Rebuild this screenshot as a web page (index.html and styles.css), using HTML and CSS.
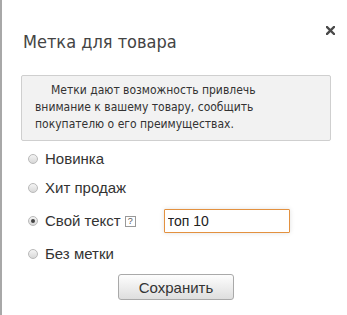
FILE: index.html
```html
<!DOCTYPE html>
<html lang="ru">
<head>
  <meta charset="UTF-8" />
  <title>Метка для товара</title>
  <link rel="stylesheet" href="styles.css">
</head>
<body>
  <div class="dialog">
    <div class="header">
      <h1 class="title">Метка для товара</h1>
      <span class="close">
        <svg width="9" height="9" viewBox="0 0 9 9"><path d="M1 1 L8 8 M8 1 L1 8" stroke="#4a4a4a" stroke-width="2.4" stroke-linecap="square"/></svg>
      </span>
    </div>
    <div class="info">Метки дают возможность привлечь внимание к вашему товару, сообщить покупателю о его преимуществах.</div>
    <div class="options">
      <label class="option"><input type="radio" name="mark" /> Новинка</label>
      <label class="option"><input type="radio" name="mark" /> Хит продаж</label>
      <div class="option option-custom">
        <label class="option-label"><input type="radio" name="mark" checked /> Свой текст <span class="help">?</span></label>
        <input type="text" class="custom-text" value="топ 10" />
      </div>
      <label class="option"><input type="radio" name="mark" /> Без метки</label>
    </div>
    <div class="actions">
      <button class="save">Сохранить</button>
    </div>
  </div>
</body>
</html>
```

FILE: styles.css
```css
body {
  margin: 0;
  background: #fff;
  font-family: "Liberation Sans", Arial, sans-serif;
  color: #333;
}
.dialog {
  height: 315px;
  box-sizing: border-box;
  border-left: 2px solid #a8a8a8;
  padding: 26px 16px 0 19px;
}
.header {
  display: flex;
  justify-content: space-between;
  align-items: flex-start;
}
.title {
  margin: 6px 0 0 2px;
  font-family: "DejaVu Sans Condensed", "DejaVu Sans", Verdana, sans-serif;
  font-weight: normal;
  font-size: 18px;
  line-height: 20px;
  color: #444;
}
.close {
  display: block;
  width: 9px;
  height: 9px;
  margin-right: -4px;
  cursor: pointer;
}
.close svg {
  display: block;
}
.info {
  margin-top: 23px;
  width: 310px;
  box-sizing: border-box;
  background: #f2f2f2;
  border: 1px solid #cfcfcf;
  border-radius: 2px;
  padding: 6px 40px 7px 13px;
  font-family: "DejaVu Sans Condensed", "DejaVu Sans", Verdana, sans-serif;
  font-size: 12px;
  line-height: 17px;
  color: #333;
  text-indent: 16px;
}
.options {
  margin-top: 10px;
  padding-left: 5px;
  display: flex;
  flex-direction: column;
  gap: 13px;
}
.option {
  display: flex;
  align-items: center;
  height: 16px;
  font-size: 15px;
  line-height: 16px;
  color: #333;
}
.option-custom {
  height: 24px;
}
.option-label {
  display: flex;
  align-items: center;
}
input[type="radio"] {
  appearance: none;
  -webkit-appearance: none;
  width: 10px;
  height: 10px;
  margin: 0 7px 0 2px;
  border: 1px solid #b9b9b9;
  border-radius: 50%;
  background: linear-gradient(#f4f4f4, #d8d8d8);
  box-sizing: border-box;
  position: relative;
}
input[type="radio"]:checked::after {
  content: "";
  position: absolute;
  left: 2px;
  top: 2px;
  width: 4px;
  height: 4px;
  border-radius: 50%;
  background: #444;
}
.help {
  display: inline-block;
  width: 9px;
  height: 9px;
  margin-left: 4px;
  border: 1px solid #999;
  font-size: 9px;
  line-height: 9px;
  text-align: center;
  color: #555;
}
.custom-text {
  margin-left: 28px;
  width: 126px;
  height: 24px;
  box-sizing: border-box;
  border: 1px solid #e3913f;
  border-radius: 1px;
  box-shadow: 0 0 5px rgba(0, 0, 0, 0.12);
  padding: 0 3px;
  font-family: "Liberation Sans", Arial, sans-serif;
  font-size: 14px;
  color: #222;
  outline: none;
}
.actions {
  margin-top: 12px;
  width: 310px;
  display: flex;
  justify-content: center;
}
.save {
  width: 116px;
  height: 26px;
  border: 1px solid #a9a9a9;
  border-radius: 3px;
  background: linear-gradient(#fdfdfd, #dedede);
  font-family: "Liberation Sans", Arial, sans-serif;
  font-size: 15px;
  color: #333;
  cursor: pointer;
}
```
